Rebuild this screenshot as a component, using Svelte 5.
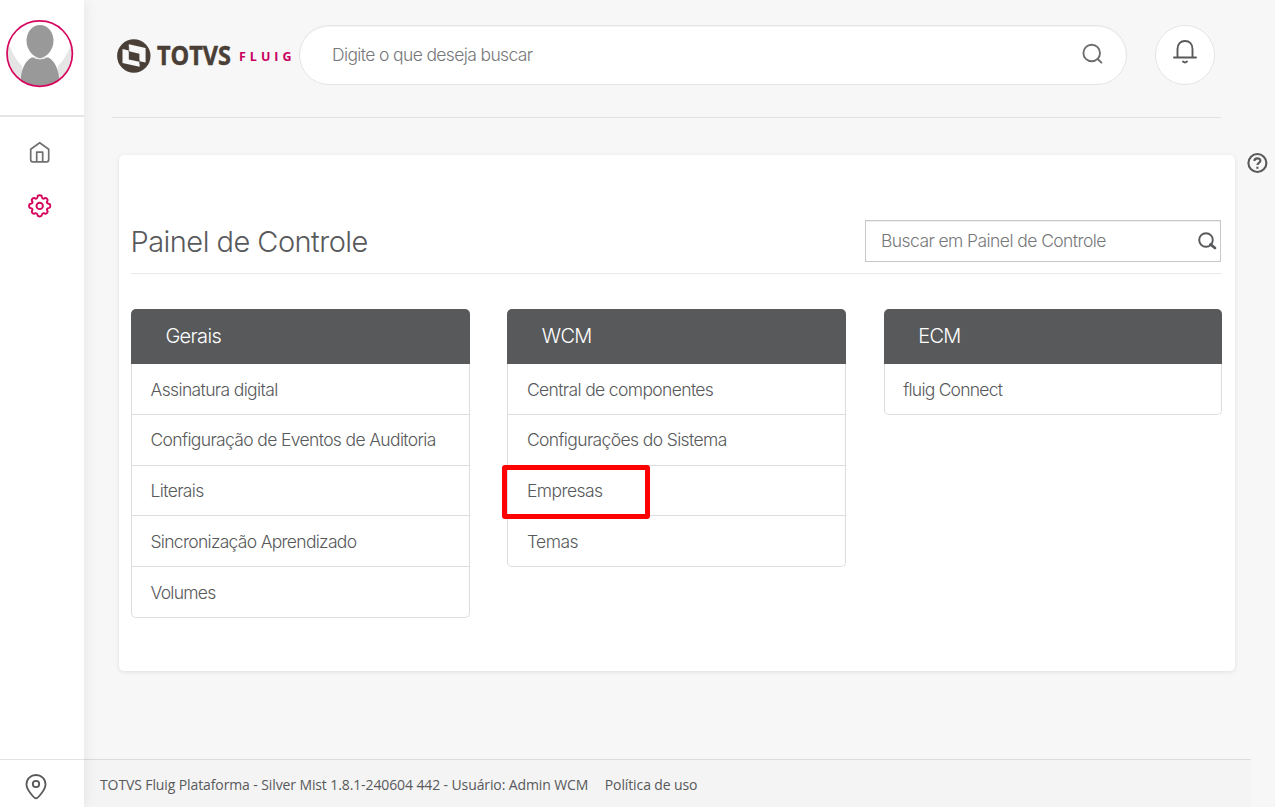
<script>
  let search = '';
  let panelSearch = '';

  const groups = [
    {
      title: 'Gerais',
      items: [
        { label: 'Assinatura digital', spacing: -0.63 },
        { label: 'Configuração de Eventos de Auditoria', spacing: -0.64 },
        { label: 'Literais', spacing: -0.63 },
        { label: 'Sincronização Aprendizado', spacing: -0.7 },
        { label: 'Volumes', spacing: -0.73 }
      ]
    },
    {
      title: 'WCM',
      items: [
        { label: 'Central de componentes', spacing: -0.63 },
        { label: 'Configurações do Sistema', spacing: -0.62 },
        { label: 'Empresas', spacing: -0.55, highlighted: true },
        { label: 'Temas', spacing: -0.55 }
      ]
    },
    {
      title: 'ECM',
      items: [{ label: 'fluig Connect', spacing: -0.77 }]
    }
  ];
</script>

<div class="app">
  <aside class="sidebar">
    <div class="profile">
      <svg class="avatar" width="68" height="68" viewBox="0 0 68 68">
        <defs>
          <clipPath id="avatar-clip"><circle cx="33.7" cy="33.6" r="32.5" /></clipPath>
        </defs>
        <circle cx="33.7" cy="33.6" r="32.5" fill="#fff" />
        <g clip-path="url(#avatar-clip)">
          <path d="M0 20 L4 27 Q8 38 16 46 L16 68 H0 Z M68 20 L64 27 Q60 38 52 46 L52 68 H68 Z" fill="#e5e5e5" />
          <path d="M15 68 V57 C16 46 22 37.5 28 37 Q34 40 40 37 C46 37.5 52 46 53 57 V68 Z" fill="#999" />
          <path d="M34 5 C42 5 47.5 12 47.5 21 C47.5 30 40 38 34 38 C28 38 20.5 30 20.5 21 C20.5 12 26 5 34 5 Z" fill="#999" />
          <path d="M26 36.5 Q34 41.5 42 36.5" fill="none" stroke="#fff" stroke-width=".8" />
        </g>
        <circle cx="33.7" cy="33.6" r="32.7" fill="none" stroke="#d6055d" stroke-width="1.7" />
      </svg>
    </div>
    <nav>
      <svg width="24" height="24" viewBox="0.3 0.5 24 24" fill="none" stroke="#707070" stroke-width="1.7" stroke-linejoin="round">
        <path d="M3 8.8 L12 2.2 L21 8.8 V19.3 Q21 21.3 19 21.3 H5 Q3 21.3 3 19.3 Z" />
        <path d="M9 21.3 V11.6 H15 V21.3" />
      </svg>
      <svg width="24" height="24" viewBox="0.3 0.1 24 24" fill="none" stroke="#d6055d" stroke-width="1.9" stroke-linejoin="round">
        <circle cx="12" cy="12" r="3.2" />
        <path d="M9.8 3 Q10 1.4 12 1.4 Q14 1.4 14.2 3 Q14.5 5 16 4.8 C17.4 3.7 18.4 4 19.2 4.8 C20 5.6 20.3 6.6 19.2 8 Q19 9.5 21 9.8 Q22.6 10 22.6 12 Q22.6 14 21 14.2 Q19 14.5 19.2 16 C20.3 17.4 20 18.4 19.2 19.2 C18.4 20 17.4 20.3 16 19.2 Q14.5 19 14.2 21 Q14 22.6 12 22.6 Q10 22.6 9.8 21 Q9.5 19 8 19.2 C6.6 20.3 5.6 20 4.8 19.2 C4 18.4 3.7 17.4 4.8 16 Q5 14.5 3 14.2 Q1.4 14 1.4 12 Q1.4 10 3 9.8 Q5 9.5 4.8 8 C3.7 6.6 4 5.6 4.8 4.8 C5.6 4 6.6 3.7 8 4.8 Q9.5 5 9.8 3 Z" />
      </svg>
    </nav>
    <div class="location">
      <svg width="22" height="26" viewBox="0 0 22 26" fill="none" stroke="#58595b" stroke-width="1.8">
        <path d="M11 24.4 C9.5 24.4 1.5 16 1.5 10.5 C1.5 5 5.7 1 11 1 C16.3 1 20.5 5 20.5 10.5 C20.5 16 12.5 24.4 11 24.4 Z" />
        <circle cx="11" cy="10" r="3.2" />
      </svg>
    </div>
  </aside>

  <div class="main">
    <header>
      <svg class="logo" width="180" height="36" viewBox="0 0 180 36">
        <circle cx="16.8" cy="18" r="16.7" fill="#4a3f36" />
        <path d="M11.8 6.3 L28.6 10 V24.4 L22.6 23.2 V28.8 L5.5 25 V11 L11.8 12.4 Z" fill="#f7f7f7" />
        <path d="M11.8 13.3 L22.4 15.8 V23.8 L11.8 21.4 Z" fill="#4a3f36" />
        <path d="M11.8 9 V14 M22.6 22 V26" fill="none" stroke="#4a3f36" stroke-width=".5" />
        <text class="totvs" x="40" y="27" textLength="74" lengthAdjust="spacingAndGlyphs">TOTVS</text>
        <text class="fluig" x="122" y="22.6">FLUIG</text>
      </svg>
      <div class="search">
        <input type="text" placeholder="Digite o que deseja buscar" bind:value={search} />
        <svg width="22" height="22" viewBox="0 0 22 22" fill="none" stroke="#6d6e70" stroke-width="1.9" stroke-linecap="round">
          <circle cx="9.7" cy="10" r="8.3" />
          <path d="M15.7 16 L19.4 19.7" />
        </svg>
      </div>
      <button class="bell" aria-label="Notificações">
        <svg width="24" height="26" viewBox="0 0 24 26" fill="none" stroke="#58595b" stroke-width="1.9" stroke-linecap="round">
          <path d="M1 18.5 H23 M4.5 18 V10 C4.5 5 7.5 2 12 2 C16.5 2 19.5 5 19.5 10 V18" />
          <path d="M10 22.6 Q12 24.2 14 22.6" />
        </svg>
      </button>
    </header>

    <div class="content">
      <section class="panel">
        <div class="panel-head">
          <h1>Painel de Controle</h1>
          <div class="panel-search">
            <input type="text" placeholder="Buscar em Painel de Controle" bind:value={panelSearch} />
            <svg width="20" height="18" viewBox="-0.5 0 20 18" fill="none" stroke="#58595b">
              <circle cx="8.5" cy="8" r="6.8" stroke-width="1.9" />
              <path d="M13 12.4 L17.5 16" stroke-width="2.8" stroke-linecap="round" />
            </svg>
          </div>
        </div>
        <div class="groups">
          {#each groups as group}
            <div class="group">
              <h2>{group.title}</h2>
              <ul>
                {#each group.items as item}
                  <li class:highlighted={item.highlighted}>
                    <span style="letter-spacing: {item.spacing}px">{item.label}</span>
                  </li>
                {/each}
              </ul>
            </div>
          {/each}
        </div>
      </section>
      <svg class="help" width="22" height="22" viewBox="0 0 22 22" fill="none" stroke="#58595b" stroke-width="2.1">
        <circle cx="11.4" cy="11" r="9" />
        <path d="M8.4 9 C8.4 5.5 14.4 5.5 14.4 8.8 C14.4 11 11.4 10.8 11.4 13" />
        <path d="M11.4 14.7 V16.8" />
      </svg>
    </div>

    <footer>
      <span>TOTVS Fluig Plataforma - Silver Mist 1.8.1-240604 442 - Usuário: Admin WCM</span>
      <span class="policy">Política de uso</span>
    </footer>
  </div>
</div>

<style>
  :global(body) {
    background: #f7f7f7;
  }

  .app {
    display: flex;
    height: 807px;
    overflow: hidden;
    color: #58595b;
    font-family: Inter, 'Liberation Sans', sans-serif;
    font-weight: 300;
  }

  .app * {
    box-sizing: border-box;
  }

  svg {
    display: block;
    flex: none;
  }

  .sidebar {
    display: flex;
    flex-direction: column;
    width: 84px;
    flex: none;
    background: #fff;
    box-shadow: 0 0 14px rgba(0, 0, 0, 0.08);
    z-index: 1;
  }

  .profile {
    height: 117px;
    padding: 20px 0 0 6px;
    border-bottom: 2px solid #e5e5e5;
  }

  nav {
    display: flex;
    flex: 1;
    flex-direction: column;
    gap: 29px;
    padding: 24px 0 0 28px;
  }

  .location {
    height: 48px;
    padding: 14px 0 0 25px;
    border-top: 1px solid #e2e2e2;
  }

  .main {
    display: flex;
    flex: 1;
    flex-direction: column;
    min-width: 0;
  }

  header {
    display: flex;
    height: 118px;
    margin: 0 54px 0 28px;
    padding: 25px 6px 0 5px;
    border-bottom: 1px solid #e3e3e3;
  }

  .logo {
    margin-top: 13px;
  }

  .totvs {
    fill: #4a3f36;
    stroke: #4a3f36;
    stroke-width: 0.5px;
    font: 700 26px 'Open Sans', sans-serif;
  }

  .fluig {
    fill: #c8005f;
    font: 700 12.5px 'Open Sans', sans-serif;
    letter-spacing: 4px;
  }

  .search {
    display: flex;
    width: 828px;
    height: 60px;
    margin-left: 2px;
    padding: 0 22px 2px 32px;
    align-items: center;
    border: 1px solid #e5e5e5;
    border-radius: 30px;
    background: #fff;
    box-shadow: inset 0 1px 1px rgba(0, 0, 0, 0.05);
  }

  input {
    flex: 1;
    min-width: 0;
    padding: 0;
    border: 0;
    outline: 0;
    background: none;
    color: inherit;
    font: inherit;
    font-size: 17.5px;
    letter-spacing: -0.63px;
  }

  input::placeholder {
    color: #77787a;
    opacity: 1;
  }

  .bell {
    display: grid;
    width: 60px;
    height: 60px;
    margin-left: 28px;
    padding: 0 0 7px;
    place-items: center;
    border: 1px solid #e5e5e5;
    border-radius: 50%;
    background: #fff;
  }

  .content {
    display: flex;
    flex: 1;
    padding: 37px 0 0 35px;
  }

  .panel {
    width: 1116px;
    height: 516px;
    padding: 65px 13px 0 12px;
    border-radius: 5px;
    background: #fff;
    box-shadow: 0 1px 4px rgba(0, 0, 0, 0.1);
  }

  .panel-head {
    display: flex;
    height: 54px;
    justify-content: space-between;
    border-bottom: 1px solid #ebebeb;
  }

  h1 {
    margin: 0 0 0 -0.5px;
    font-size: 29px;
    font-weight: 300;
    line-height: 43px;
    letter-spacing: -0.53px;
  }

  .panel-search {
    display: flex;
    width: 356px;
    height: 42px;
    margin-right: 1px;
    padding: 0 3px 0 15px;
    align-items: center;
    border: 1px solid #c8c8c8;
    box-shadow: inset 0 1px 1px rgba(0, 0, 0, 0.07);
  }

  .panel-search input {
    padding-bottom: 2px;
    letter-spacing: -0.57px;
  }

  .groups {
    display: grid;
    grid-template-columns: 339px 339px 338px;
    gap: 37.4px;
    align-items: start;
    padding-top: 35px;
  }

  h2 {
    height: 55px;
    margin: 0;
    padding-left: 34.4px;
    border-radius: 5px 5px 0 0;
    background: #58595b;
    color: #fff;
    font-size: 20px;
    font-weight: 300;
    line-height: 54px;
    letter-spacing: -0.65px;
  }

  ul {
    margin: 0;
    padding: 0;
    border: 1px solid #ddd;
    border-top: 0;
    border-radius: 0 0 5px 5px;
    list-style: none;
  }

  li {
    position: relative;
    height: 50.2px;
    padding-left: 18.5px;
    font-size: 17.5px;
    line-height: 51px;
  }

  li + li {
    height: 50.6px;
    border-top: 1px solid #ddd;
    line-height: 49.4px;
  }

  li:nth-child(n + 4) {
    line-height: 51.4px;
  }

  .highlighted::after {
    position: absolute;
    top: -1px;
    left: -6px;
    box-sizing: border-box;
    width: 148px;
    height: 54px;
    border: 5px solid #f00;
    border-radius: 3px;
    content: '';
    z-index: 1;
  }

  .help {
    margin: -3px 0 0 11px;
  }

  footer {
    display: flex;
    width: 1167px;
    height: 48px;
    padding-left: 16px;
    gap: 16.5px;
    border-top: 1px solid #dcdcdc;
    background: #f4f4f4;
    font: 400 14px/49px 'Open Sans', sans-serif;
    letter-spacing: -0.11px;
    white-space: nowrap;
  }
</style>
